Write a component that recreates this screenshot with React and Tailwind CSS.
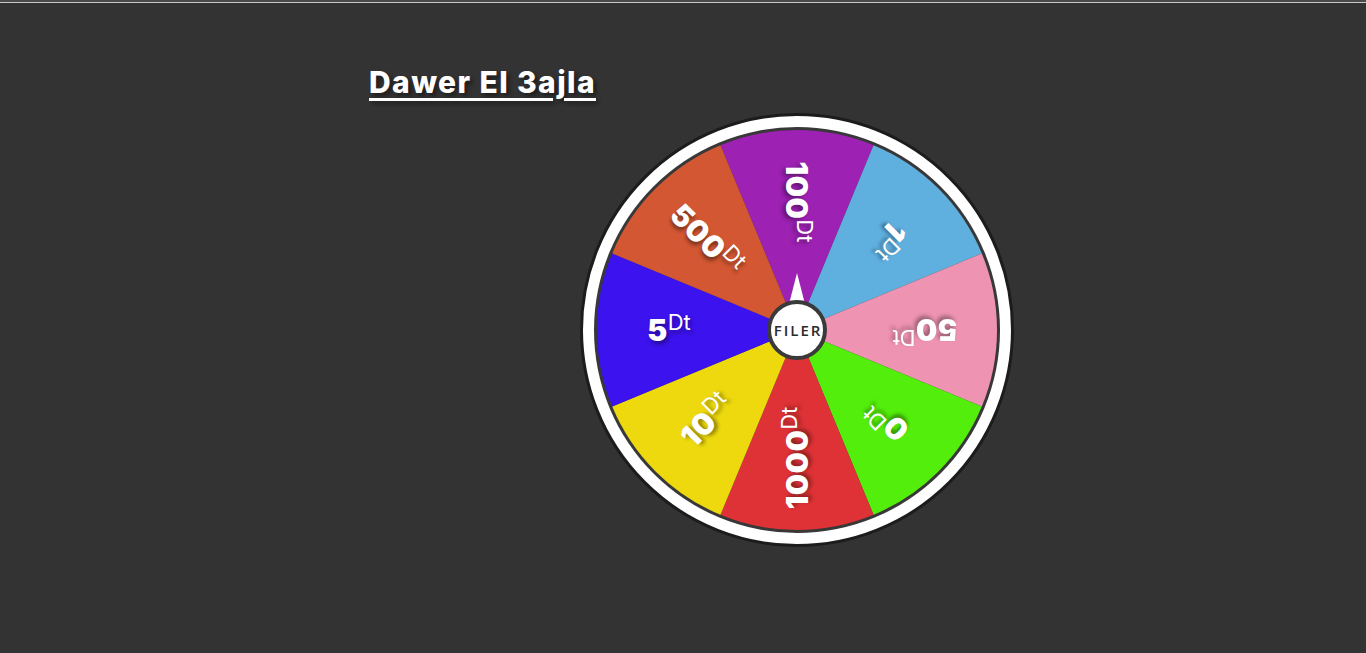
import React from 'react';

// wheel segments, clockwise from the top (angle = direction from centre, 0 = right)
const segments = [
  { value: '100', color: '#9d21b3', angle: -90 },
  { value: '1', color: '#60b0df', angle: -45 },
  { value: '50', color: '#ee93b1', angle: 0 },
  { value: '0', color: '#53ee0c', angle: 45 },
  { value: '1000', color: '#df3236', angle: 90 },
  { value: '10', color: '#edd90d', angle: 135 },
  { value: '5', color: '#3c12ee', angle: 180 },
  { value: '500', color: '#d35732', angle: -135 },
];

const C = 217;
const R = 200;

const slicePath = (angle) => {
  const a1 = ((angle - 22.5) * Math.PI) / 180;
  const a2 = ((angle + 22.5) * Math.PI) / 180;
  const x1 = C + R * Math.cos(a1);
  const y1 = C + R * Math.sin(a1);
  const x2 = C + R * Math.cos(a2);
  const y2 = C + R * Math.sin(a2);
  return `M${C},${C} L${x1},${y1} A${R},${R} 0 0 1 ${x2},${y2} Z`;
};

const Label = ({ value, angle }) => (
  <div
    className="absolute left-[17px] top-[197px] w-[200px] h-[40px] flex items-center justify-center pr-[56px] origin-right"
    style={{ transform: `rotate(${angle - 180}deg)` }}
  >
    <div className="flex items-start text-white [text-shadow:2px_3px_4px_rgba(0,0,0,0.4)]">
      <span className="font-['Inter',sans-serif] font-black text-[30px] leading-none tracking-[0.5px]">{value}</span>
      <span className="font-['Inter',sans-serif] font-normal text-[22px] leading-none -mt-[4px]">Dt</span>
    </div>
  </div>
);

const Wheel = () => (
  <div className="relative w-[434px] h-[434px]">
    <svg width="434" height="434" viewBox="0 0 434 434" className="absolute inset-0">
      <circle cx={C} cy={C} r="215.5" fill="#ffffff" stroke="#1c1c1c" strokeWidth="3" />
      <circle cx={C} cy={C} r="203" fill="#383838" />
      {segments.map((s) => (
        <path key={s.value} d={slicePath(s.angle)} fill={s.color} />
      ))}
      <polygon points="217,160 209,191 225,191" fill="#ffffff" />
    </svg>
    {segments.map((s) => (
      <Label key={s.value} value={s.value} angle={s.angle} />
    ))}
    <div className="absolute left-[187px] top-[187px] w-[60px] h-[60px] rounded-full bg-white border-[4px] border-[#3a3a3a] flex items-center justify-center">
      <span className="font-['Open_Sans',sans-serif] font-semibold text-[15px] tracking-[2px] pl-[2px] text-[#2b2b2b] leading-none">
        FILER
      </span>
    </div>
  </div>
);

export default function App() {
  return (
    <div className="min-h-screen bg-[#333333]">
      <div className="h-[2px] bg-[#4a4a4a]" />
      <div className="h-px bg-[#c9c9c9]" />
      <div className="pl-[369px] pt-[58px]">
        <h1 className="font-['Inter',sans-serif] font-extrabold text-[30px] leading-[42px] tracking-[1.4px] text-white underline decoration-[3px] underline-offset-[5px] [text-shadow:3px_3px_4px_rgba(0,0,0,0.45)]">
          Dawer El 3ajla
        </h1>
      </div>
      <div className="ml-[580px] mt-[10px]">
        <Wheel />
      </div>
    </div>
  );
}
